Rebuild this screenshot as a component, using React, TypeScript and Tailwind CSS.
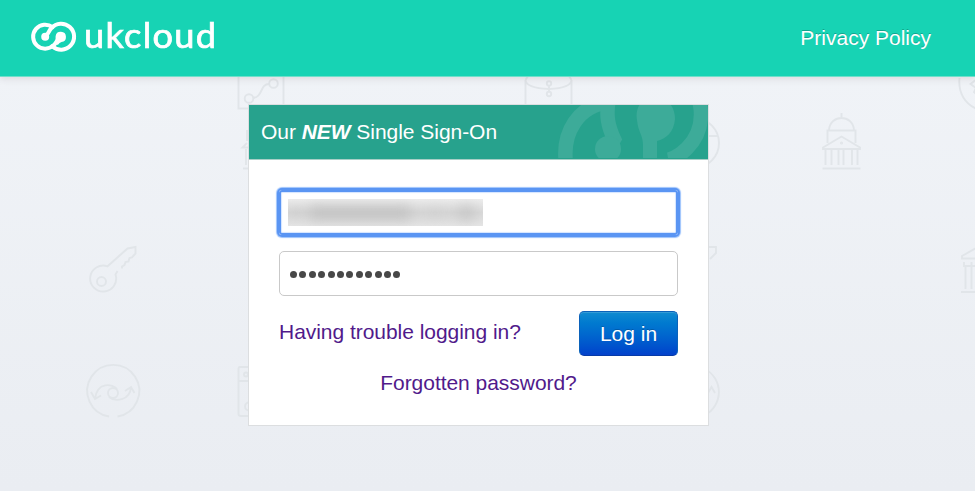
function Logo() {
  return (
    <div className="flex h-10 items-start">
      <svg width="50" height="40" viewBox="28 16 50 40" aria-hidden="true">
        <g fill="none" stroke="#fff" strokeWidth="4" strokeLinecap="round">
          <path d="M52.500 27.200A12 12 0 1 0 53.400 45.400Q55.500 43.600 56.800 41.200" />
          <path d="M45.500 36.200C48.600 34.200 48.400 31 51.400 28A13 13 0 1 1 52.300 46.200" />
        </g>
        <circle cx="45.200" cy="36.800" r="4" fill="#fff" />
        <path d="M55.600 36.200A5.200 5.200 0 1 1 61.500 42.100Q59.600 42.400 57.800 45L54.600 42.500Q56 40 55.600 36.200Z" fill="#fff" />
      </svg>
      <span className="-mt-px ml-[5.500px] origin-left scale-x-[1.065] whitespace-nowrap font-['Lato',sans-serif] text-[34px] leading-[40px] tracking-[1.200px] text-white [-webkit-text-stroke:0.700px_#fff]">
        ukcloud
      </span>
    </div>
  );
}

function Pattern() {
  return (
    <svg width="975" height="491" viewBox="0 0 975 491" fill="none" stroke="#e1e5e9" strokeWidth="1.900" aria-hidden="true">
      {/* chart tile */}
      <path d="M238.500 70V108.500H283.500V70M253 98C263 97 260 84 269 84" />
      <circle cx="249" cy="98.500" r="4.300" />
      <circle cx="273.500" cy="83.500" r="4.300" />
      {/* document holder */}
      <path d="M525.500 106V80Q526 88 549 89Q571 88 571.500 80V106M525.500 80L528 76M571.500 80L569 76M549 86V92" />
      <circle cx="549" cy="83.500" r="2.200" />
      <circle cx="549" cy="94" r="2.200" />
      {/* domed buildings */}
      <path d="M841.500 113V118M829 130C830 114 853 114 854 130M827.500 143V130.500H855.500V143M823 147.500L841.500 136.500L860 147.500V149H823ZM825.500 149V165M831.500 149V165M838.500 149V165M843.500 149V165M852 149V165M857.500 149V165M822.500 168.500H860.500" />
      <circle cx="841.500" cy="143" r="0.600" />
      <path d="M247 130V141M247 143L242.500 147.500H249M246 149V165M243 168.500H250" />
      {/* globes */}
      <path d="M959.500 78C958 93 965 104 977 109M977 79L970.500 84L976 88L974 92L977 95" />
      <circle cx="694" cy="143" r="25" />
      <path d="M706 136H718" />
      {/* keys */}
      <path d="M117.500 271L115.500 274.500A13 13 0 1 1 107.500 266.300L127.500 248.500L135.500 247V253.500L132 257.500L129.500 258L128.500 261.500L125.500 262L124.500 265L122 266.500V268.500" />
      <circle cx="101.500" cy="281.500" r="4.500" />
      <path d="M707 247H716V253L710 259" />
      {/* exchange arrows */}
      <path d="M109 416.500A26 26 0 1 1 117.500 416.500" />
      <circle cx="113" cy="393" r="5" />
      <path d="M95 399C97 381 113 384 117 389M91 392L95 399L101 395.500M109 397C115 402 130 401 131 387M125 391L131 387L134.500 393" />
      <path d="M705 369A26 26 0 0 1 705 415M708 393L711.500 387L715 393" />
      {/* server */}
      <path d="M249 367H240Q238.500 367 238.500 369V414Q238.500 416 241 416H249M239 381H249" />
      <circle cx="246" cy="374.500" r="2" />
      <circle cx="249" cy="406.500" r="4" />
      {/* columned building */}
      <path d="M978 247L962 256V258.500H978M964 262V266H978M965.500 266V289M971.500 262V289M961 292H978" />
    </svg>
  );
}

function PanelEmblem() {
  return (
    <svg className="absolute right-0 top-0" width="151" height="53" viewBox="557 106 151 53" fill="none" stroke="#3dab99" strokeWidth="14.500" aria-hidden="true">
      <clipPath id="rightside">
        <path d="M668 90H720V170H668V159L655 90Z" />
      </clipPath>
      <path d="M566 164C562 134 578 106 610 103" />
      <circle cx="653" cy="115.500" r="48" clipPath="url(#rightside)" />
      <path d="M608.500 102C606 117 608 127 614 140L608 150" />
      <circle cx="608" cy="150" r="13" fill="#3dab99" stroke="none" />
      <path d="M637 121C635 110 640 99 655 98C669 99 675 109 675 120C674 133 666 140 657 142V164H643V146C643 136 638 133 637 121Z" fill="#3dab99" stroke="none" />
    </svg>
  );
}

export default function App() {
  return (
    <div className="relative isolate flex h-[491px] w-[975px] flex-col overflow-hidden bg-linear-to-b from-[#f1f4f8] to-[#eaedf2] font-['Liberation_Sans',Arial,sans-serif] text-[21px] leading-6">
      <div className="absolute inset-0 -z-10">
        <Pattern />
      </div>
      <header className="flex h-[77px] shrink-0 items-start justify-between border-b border-[#70dfca] bg-[#17d3b4] pl-7 pr-11 pt-4 shadow-[0_2px_7px_rgba(70,50,60,0.12)]">
        <Logo />
        <a className="mt-[10px] text-white [text-shadow:0_-1px_0_rgba(0,0,0,0.22)]">Privacy Policy</a>
      </header>

      <main className="ml-[248px] mt-[27px] flex h-[322px] w-[461px] shrink-0 flex-col border border-[#dcdee0] bg-white">
        <div className="relative flex h-[55px] shrink-0 items-center overflow-hidden border-b border-[#a9cfc7] bg-[#27a28d] pl-3 text-white">
          <PanelEmblem />
          <h1 className="relative whitespace-nowrap tracking-[-0.040px]">
            Our <strong className="italic">NEW</strong> Single Sign-On
          </h1>
        </div>
        <form className="flex flex-col px-[30px] pt-[30px]">
          <div className="flex h-[45px] items-center rounded-[3px] bg-white pl-[9px] shadow-[0_0_0_2px_#5a95f3,0_0_1px_3px_#9cc2fc,inset_0_0_0_2px_#5a95f3,inset_0_0_1px_3px_#d3e4ff]">
            <div className="h-[27px] w-[195px] overflow-hidden bg-linear-to-b from-[#eeeeee] via-[#d9d9d9] to-[#e6e6e6]">
              <div className="flex h-full items-center gap-2 blur-[7px]">
                <span className="h-2 w-3 bg-[#c3c3c3]" />
                <span className="h-3 w-[104px] bg-[#bdbdbd]" />
                <span className="h-2 w-[30px] bg-[#cccccc]" />
                <span className="h-3 w-4 bg-[#bfbfbf]" />
              </div>
            </div>
          </div>
          <div className="mt-4 flex h-[45px] items-center gap-[2.400px] rounded-[5px] border border-[#c9c9c9] pl-[10px]">
            {Array.from({ length: 12 }, (_, i) => (
              <span key={i} className="mt-[2px] size-[7px] rounded-full bg-[#484848]" />
            ))}
          </div>
          <div className="mt-[15px] flex h-[45px] items-start justify-between">
            <a className="mt-[9px] whitespace-nowrap tracking-[-0.040px] text-[#511a8b]">Having trouble logging in?</a>
            <button type="button" className="h-[45px] w-[99px] rounded-[5px] border border-[#0b62ba] border-b-[#073ba7] bg-linear-to-b from-[#118bd0] to-[#0541cb] text-white shadow-[inset_0_1px_0_rgba(255,255,255,0.15)] [text-shadow:0_-1px_0_rgba(0,0,0,0.2)]">
              Log in
            </button>
          </div>
          <a className="mt-[15px] text-center tracking-[-0.040px] text-[#511a8b]">Forgotten password?</a>
        </form>
      </main>
    </div>
  );
}
